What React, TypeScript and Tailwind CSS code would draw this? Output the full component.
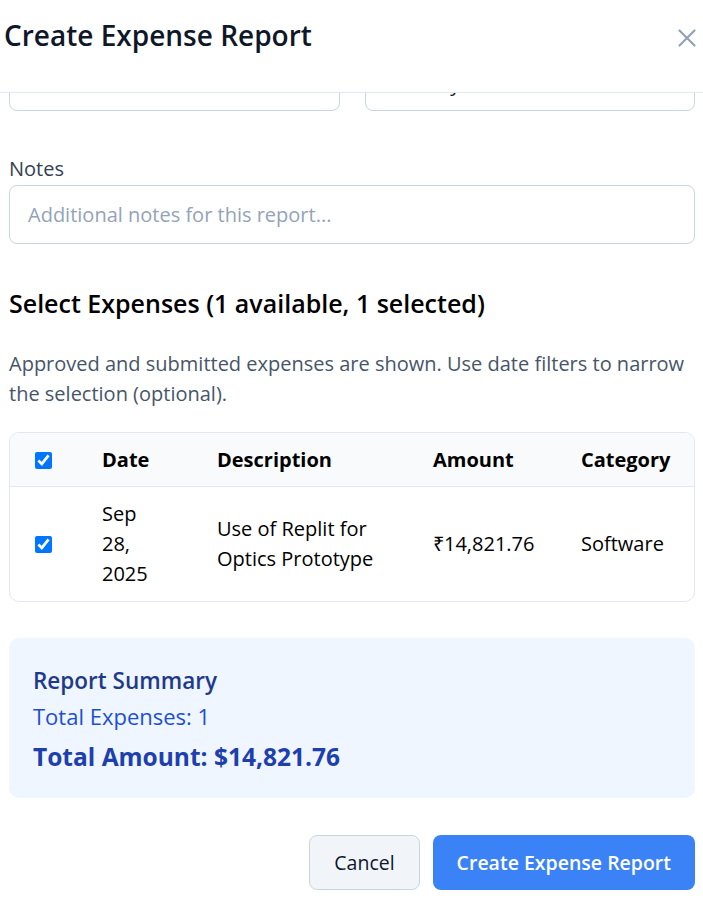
import React from "react";

const rows = [
  {
    date: "Sep 28, 2025",
    description: "Use of Replit for Optics Prototype",
    amount: "₹14,821.76",
    category: "Software",
  },
];

function CloseIcon() {
  return (
    <svg width="18" height="18" viewBox="0 0 18 18" fill="none" stroke="#94a3b8" strokeWidth="2.2" strokeLinecap="round">
      <path d="M1.5 1.5 16.5 16.5" />
      <path d="M16.5 1.5 1.5 16.5" />
    </svg>
  );
}

export default function App() {
  return (
    <div className="relative h-[924px] w-[703px] overflow-hidden bg-white font-['Open_Sans',sans-serif] text-[20px] text-[#0f172a]">
      <header className="flex h-[93px] items-start justify-between border-b border-[#e2e8f0] pl-[4px] pr-[7px]">
        <h2 className="pt-[18px] text-[28px] font-semibold leading-[34px] text-[#0f172a]">Create Expense Report</h2>
        <button type="button" className="mt-[29px]">
          <CloseIcon />
        </button>
      </header>

      <div className="h-[831px] overflow-hidden">
        <div className="-mt-[40px] pl-[9px] pr-[8px]">
          <div className="grid grid-cols-2 gap-[25px]">
            <div className="flex h-[58px] items-center rounded-[8px] border border-[#cbd5e1] px-[18px] text-[#0f172a]">
              09/01/2025
            </div>
            <div className="flex h-[58px] items-center rounded-[8px] border border-[#cbd5e1] px-[18px] pt-[4px] text-[#0f172a]">
              Monthly
            </div>
          </div>

          <label className="mt-[43px] block font-medium leading-[30px] text-[#334155]">Notes</label>
          <div className="mt-[1px] flex h-[59px] items-center rounded-[8px] border border-[#cbd5e1] px-[18px] text-[#94a3b8]">
            Additional notes for this report...
          </div>

          <h3 className="mt-[43px] text-[25px] font-semibold leading-[32px] text-black">
            Select Expenses (1 available, 1 selected)
          </h3>
          <p className="mt-[30px] leading-[30px] text-[#475569]">
            Approved and submitted expenses are shown. Use date filters to narrow the selection (optional).
          </p>

          <div className="mt-[23px] overflow-hidden rounded-[10px] border border-[#e2e8f0]">
            <table className="w-full table-fixed border-collapse text-left">
              <colgroup>
                <col className="w-[76px]" />
                <col className="w-[115px]" />
                <col className="w-[216px]" />
                <col className="w-[148px]" />
                <col />
              </colgroup>
              <thead className="bg-[#f8fafc]">
                <tr className="border-b border-[#e2e8f0]">
                  <th className="pt-[12px] pb-[11px] pl-[25px] align-middle">
                    <input type="checkbox" defaultChecked className="block h-[17px] w-[17px]" />
                  </th>
                  <th className="pt-[12px] pb-[11px] px-[16px] font-bold leading-[30px] text-black">Date</th>
                  <th className="pt-[12px] pb-[11px] px-[16px] font-bold leading-[30px] text-black">Description</th>
                  <th className="pt-[12px] pb-[11px] px-[16px] font-bold leading-[30px] text-black">Amount</th>
                  <th className="pt-[12px] pb-[11px] px-[16px] font-bold leading-[30px] text-black">Category</th>
                </tr>
              </thead>
              <tbody>
                {rows.map((r) => (
                  <tr key={r.description} className="leading-[30px] text-black">
                    <td className="py-[12px] pl-[25px] align-middle">
                      <input type="checkbox" defaultChecked className="block h-[17px] w-[17px]" />
                    </td>
                    <td className="py-[12px] px-[16px] align-middle">
                      <div className="w-[52px]">{r.date}</div>
                    </td>
                    <td className="py-[12px] px-[16px] align-middle">
                      <div className="w-[175px]">{r.description}</div>
                    </td>
                    <td className="py-[12px] px-[16px] align-middle">{r.amount}</td>
                    <td className="py-[12px] px-[16px] align-middle">{r.category}</td>
                  </tr>
                ))}
              </tbody>
            </table>
          </div>

          <div className="mt-[36px] rounded-[10px] bg-[#eff6ff] px-[24px] pt-[28px] pb-[24px]">
            <div className="text-[22.5px] font-semibold leading-[30px] text-[#1e3a8a]">Report Summary</div>
            <div className="mt-[5px] text-[22px] leading-[30px] text-[#1d4ed8]">Total Expenses: 1</div>
            <div className="mt-[9px] text-[24.5px] font-bold leading-[34px] text-[#1e40af]">Total Amount: $14,821.76</div>
          </div>

          <div className="mt-[37px] flex justify-end gap-[13px]">
            <button type="button" className="h-[55px] rounded-[8px] border border-[#cbd5e1] bg-[#f1f5f9] px-[24px] text-[19.5px] font-medium text-[#0f172a]">
              Cancel
            </button>
            <button type="button" className="h-[55px] rounded-[8px] bg-[#3b82f6] px-[24px] text-[19.5px] font-semibold text-white">
              Create Expense Report
            </button>
          </div>
        </div>
      </div>
    </div>
  );
}
